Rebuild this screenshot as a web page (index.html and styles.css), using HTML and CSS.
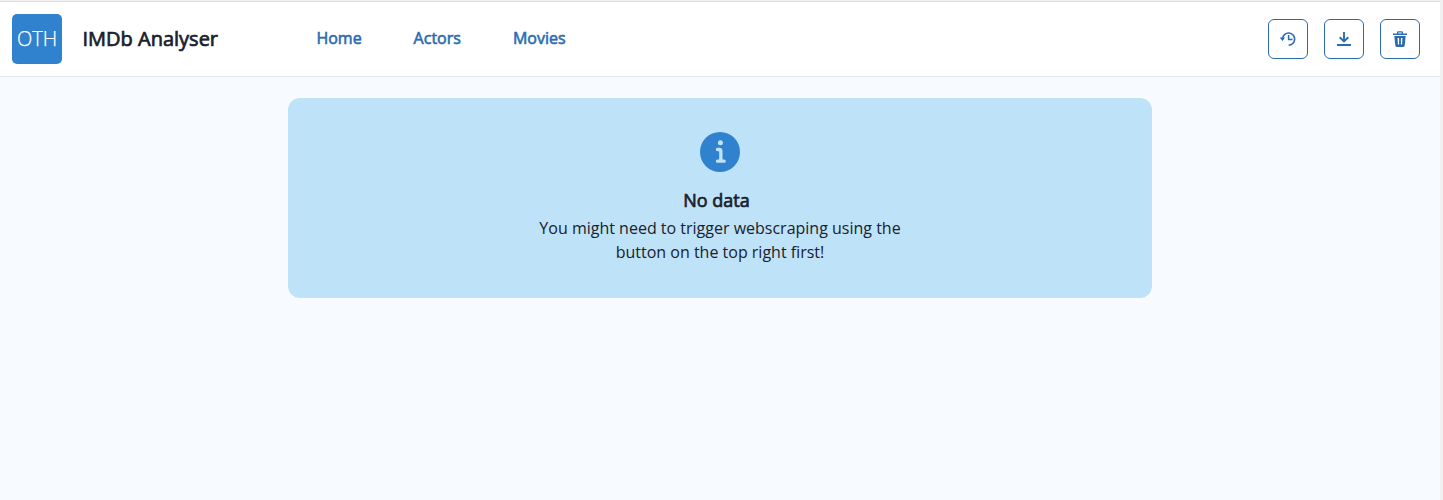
FILE: index.html
```html
<!DOCTYPE html>
<html lang="en">
<head>
<meta charset="utf-8">
<title>IMDb Analyser</title>
<link rel="stylesheet" href="styles.css">
</head>
<body>
<div class="page">
  <header class="header">
    <div class="logo">OTH</div>
    <h1 class="brand">IMDb Analyser</h1>
    <nav class="nav">
      <a>Home</a>
      <a>Actors</a>
      <a>Movies</a>
    </nav>
    <div class="actions">
      <button class="action" aria-label="History">
        <svg viewBox="0 0 16 16"><g fill="none" stroke="currentColor" stroke-width="1.6"><path d="M2.500 7.300A6.100 6.100 0 1 1 8.600 14.200"/><path d="M8.600 3.900v4.500h3.900" stroke-width="1.500"/></g><path d="M-.3 6.400h5.400L2.400 10z"/></svg>
      </button>
      <button class="action" aria-label="Download">
        <svg viewBox="0 0 16 16" fill="none" stroke="currentColor" stroke-width="1.9"><path d="M8 1v9.200M3.700 6.300 8 10.400l4.300-4.100M1 14h14"/></svg>
      </button>
      <button class="action" aria-label="Delete">
        <svg viewBox="0 0 16 16"><path fill-rule="evenodd" d="M5 2.500V1.600Q5 .2 6.400.2h3.200Q11 .2 11 1.600v.9h4V4H1V2.500zM6.300 2.500h3.400V1.500H6.300zM2.300 5h11.400l-1 9.600Q12.600 16 11.200 16H4.800Q3.400 16 3.300 14.600zM5.600 7l.3 6.500h1.200V7zM8.900 7v6.500h1.200l.3-6.500z"/></svg>
      </button>
    </div>
  </header>
  <main class="main">
    <section class="alert" role="alert">
      <svg class="info" viewBox="0 0 24 24"><path d="M12,0A12,12,0,1,0,24,12,12.013,12.013,0,0,0,12,0Zm.25,5a1.5,1.5,0,1,1-1.5,1.5A1.5,1.5,0,0,1,12.25,5ZM14.5,18.5h-4a1,1,0,0,1,0-2h.75a.25.25,0,0,0,.25-.25v-4.5a.25.25,0,0,0-.25-.25H10.5a1,1,0,0,1,0-2h1a2,2,0,0,1,2,2v4.75a.25.25,0,0,0,.25.25h.75a1,1,0,1,1,0,2Z"/></svg>
      <h2 class="alert-title">No data</h2>
      <p class="alert-text">You might need to trigger webscraping using the button on the top right first!</p>
    </section>
  </main>
</div>
</body>
</html>
```

FILE: styles.css
```css
* { box-sizing: border-box; margin: 0; }
body {
  height: 500px;
  overflow: hidden;
  padding: 1px 3px 0 0;
  background: #f1f1f1;
  color: #1a202c;
  font: 16px/24px "Open Sans", sans-serif;
}
.page {
  height: 499px;
  border-top: 1px solid #dedede;
  background: #f7fbff;
}
.header {
  display: flex;
  align-items: center;
  height: 75px;
  padding: 0 20px 0 12px;
  background: #fff;
  border-bottom: 1px solid #e2e8f0;
}
.logo {
  width: 50px;
  height: 50px;
  border-radius: 5px;
  background: #3182ce;
  color: #fff;
  font-size: 20px;
  font-weight: 300;
  line-height: 50px;
  text-align: center;
  -webkit-text-stroke: 0.25px;
}
.brand {
  width: 233.5px;
  margin-left: 20.5px;
  font-size: 20px;
  font-weight: 400;
  -webkit-text-stroke: 0.7px;
}
.nav {
  display: flex;
  gap: 52px;
  padding: 0 0 2px 0.4px;
  color: #2b6cb0;
  -webkit-text-stroke: 0.6px;
}
.actions {
  display: flex;
  gap: 16px;
  margin-left: auto;
}
.action {
  display: flex;
  align-items: center;
  justify-content: center;
  width: 40px;
  height: 40px;
  padding: 0;
  border: 1px solid #2b6cb0;
  border-radius: 6px;
  background: transparent;
  color: #2b6cb0;
}
.action svg {
  width: 16px;
  height: 16px;
  overflow: visible;
  fill: currentColor;
}
.action svg[fill="none"] { fill: none; }
.main { padding-top: 21px; }
.alert {
  display: flex;
  flex-direction: column;
  align-items: center;
  width: 864px;
  height: 200px;
  margin: 0 auto;
  padding-top: 34px;
  border-radius: 12px;
  background: #bee3f8;
  text-align: center;
}
.info {
  width: 40px;
  height: 40px;
  fill: #3182ce;
}
.alert-title {
  margin: 16px 7px 4px 0;
  font-size: 18px;
  font-weight: 400;
  line-height: 24px;
  -webkit-text-stroke: 0.7px;
}
.alert-text { width: 384px; }
```
